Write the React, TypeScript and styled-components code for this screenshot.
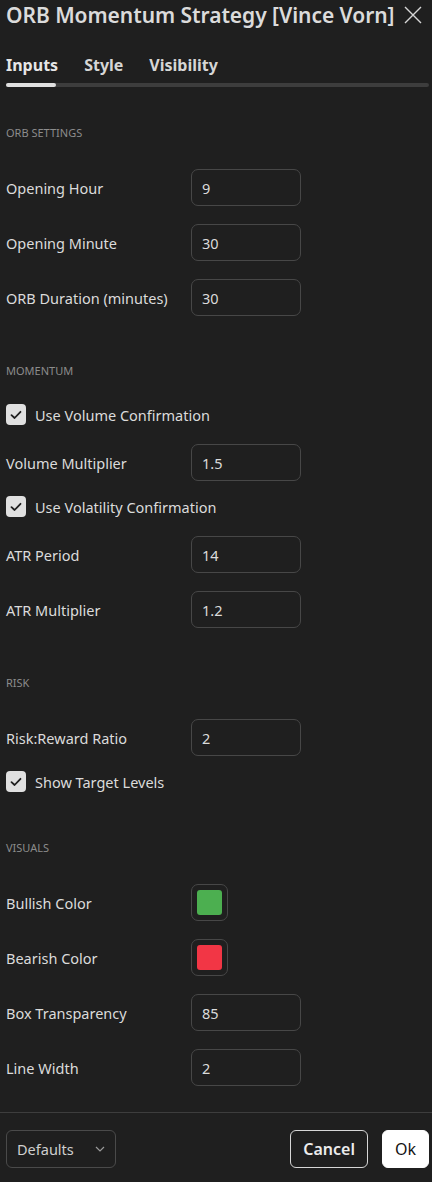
import React from "react";
import styled, { createGlobalStyle } from "styled-components";

const GlobalStyle = createGlobalStyle`
  html, body {
    margin: 0;
    padding: 0;
    background: #1f1f1f;
  }
  body {
    font-family: "Noto Sans", "DejaVu Sans", sans-serif;
    color: #dbdbdb;
  }
`;

type Field =
  | { kind: "input"; label: string; value: string }
  | { kind: "check"; label: string }
  | { kind: "color"; label: string; color: string };

type Section = { title: string; fields: Field[] };

const sections: Section[] = [
  {
    title: "ORB SETTINGS",
    fields: [
      { kind: "input", label: "Opening Hour", value: "9" },
      { kind: "input", label: "Opening Minute", value: "30" },
      { kind: "input", label: "ORB Duration (minutes)", value: "30" },
    ],
  },
  {
    title: "MOMENTUM",
    fields: [
      { kind: "check", label: "Use Volume Confirmation" },
      { kind: "input", label: "Volume Multiplier", value: "1.5" },
      { kind: "check", label: "Use Volatility Confirmation" },
      { kind: "input", label: "ATR Period", value: "14" },
      { kind: "input", label: "ATR Multiplier", value: "1.2" },
    ],
  },
  {
    title: "RISK",
    fields: [
      { kind: "input", label: "Risk:Reward Ratio", value: "2" },
      { kind: "check", label: "Show Target Levels" },
    ],
  },
  {
    title: "VISUALS",
    fields: [
      { kind: "color", label: "Bullish Color", color: "#4caf50" },
      { kind: "color", label: "Bearish Color", color: "#f23645" },
      { kind: "input", label: "Box Transparency", value: "85" },
      { kind: "input", label: "Line Width", value: "2" },
    ],
  },
];

const Dialog = styled.div`
  width: 432px;
  height: 1182px;
  display: flex;
  flex-direction: column;
  background: #1f1f1f;
  overflow: hidden;
`;

const Header = styled.div`
  display: flex;
  align-items: center;
  justify-content: space-between;
  height: 30px;
  padding: 0 9px 0 6px;
`;

const Title = styled.h1`
  margin: 0;
  font-size: 21px;
  font-weight: 600;
  color: #dbdbdb;
  white-space: nowrap;
  letter-spacing: -0.05px;
`;

const CloseButton = styled.button`
  width: 20px;
  height: 20px;
  padding: 0;
  border: none;
  background: none;
  color: #dbdbdb;
  display: flex;
  align-items: center;
  justify-content: center;
`;

const Tabs = styled.div`
  display: flex;
  gap: 26px;
  padding: 23px 6px 0;
  height: 24px;
  align-items: center;
`;

const Tab = styled.div<{ $active?: boolean }>`
  font-size: 16px;
  font-weight: 700;
  color: ${({ $active }) => ($active ? "#e6e6e6" : "#d6d6d6")};
`;

const Track = styled.div`
  margin: 6px 3px 0 6px;
  height: 4px;
  border-radius: 2px;
  background: #3d3d3d;
  display: flex;
`;

const TrackActive = styled.div`
  width: 50px;
  height: 4px;
  border-radius: 2px;
  background: #e0e0e0;
`;

const Content = styled.div`
  flex: 1;
  display: flex;
  flex-direction: column;
  padding: 0 6px;
`;

const SectionBlock = styled.div`
  display: flex;
  flex-direction: column;
  margin-top: 17px;
`;

const SectionTitle = styled.div`
  height: 56px;
  display: flex;
  align-items: center;
  font-size: 11px;
  color: #8c8c8c;
  text-transform: uppercase;
`;

const Row = styled.div<{ $tall?: boolean }>`
  box-sizing: border-box;
  height: ${({ $tall }) => ($tall ? "55px" : "37px")};
  padding-bottom: ${({ $tall }) => ($tall ? "0" : "4px")};
  display: flex;
  align-items: center;
`;

const Label = styled.div`
  width: 185px;
  font-size: 14.5px;
  color: #dbdbdb;
  white-space: nowrap;
`;

const TextInput = styled.div`
  box-sizing: border-box;
  width: 110px;
  height: 37px;
  border: 1px solid #474747;
  border-radius: 7px;
  padding: 0 10px;
  display: flex;
  align-items: center;
  font-size: 14.5px;
  color: #dbdbdb;
`;

const Swatch = styled.div`
  box-sizing: border-box;
  width: 37px;
  height: 37px;
  border: 1px solid #474747;
  border-radius: 7px;
  padding: 5px;
  display: flex;
`;

const SwatchFill = styled.div<{ $color: string }>`
  flex: 1;
  border-radius: 3px;
  background: ${({ $color }) => $color};
`;

const CheckBox = styled.div`
  width: 20px;
  height: 21px;
  border-radius: 4px;
  background: #e0e0e0;
  display: flex;
  align-items: center;
  justify-content: center;
  margin-right: 9px;
`;

const CheckLabel = styled.span`
  font-size: 14.5px;
  color: #dbdbdb;
`;

const Divider = styled.div`
  height: 1px;
  background: #3d3d3d;
`;

const Footer = styled.div`
  display: flex;
  align-items: center;
  padding: 17px 3px 14px 6px;
  gap: 14px;
`;

const Select = styled.div`
  box-sizing: border-box;
  width: 110px;
  height: 38px;
  border: 1px solid #4a4a4a;
  border-radius: 6px;
  padding: 0 10px;
  display: flex;
  align-items: center;
  justify-content: space-between;
  font-size: 14.5px;
  color: #cfcfcf;
  margin-right: auto;
`;

const Button = styled.button<{ $primary?: boolean }>`
  box-sizing: border-box;
  height: 38px;
  padding: 0 12px;
  border-radius: 6px;
  font-family: inherit;
  font-size: 16px;
  font-weight: ${({ $primary }) => ($primary ? 400 : 600)};
  border: 1px solid ${({ $primary }) => ($primary ? "#ffffff" : "#d6d6d6")};
  background: ${({ $primary }) => ($primary ? "#ffffff" : "transparent")};
  color: ${({ $primary }) => ($primary ? "#131313" : "#ececec")};
`;

const CheckIcon = () => (
  <svg width="12" height="10" viewBox="0 0 12 10">
    <path d="M1.5 5.2 L4.6 8 L10.5 1.8" fill="none" stroke="#1f1f1f" strokeWidth="1.8" strokeLinecap="round" strokeLinejoin="round" />
  </svg>
);

const renderField = (f: Field, i: number) => {
  if (f.kind === "check") {
    return (
      <Row key={i}>
        <CheckBox>
          <CheckIcon />
        </CheckBox>
        <CheckLabel>{f.label}</CheckLabel>
      </Row>
    );
  }
  return (
    <Row key={i} $tall>
      <Label>{f.label}</Label>
      {f.kind === "input" ? (
        <TextInput>{f.value}</TextInput>
      ) : (
        <Swatch>
          <SwatchFill $color={f.color} />
        </Swatch>
      )}
    </Row>
  );
};

export default function App() {
  return (
    <>
      <GlobalStyle />
      <Dialog>
        <Header>
          <Title>ORB Momentum Strategy [Vince Vorn]</Title>
          <CloseButton aria-label="Close">
            <svg width="18" height="18" viewBox="0 0 18 18">
              <path d="M1 1 L17 17 M17 1 L1 17" stroke="#d6d6d6" strokeWidth="1.4" />
            </svg>
          </CloseButton>
        </Header>
        <Tabs>
          <Tab $active>Inputs</Tab>
          <Tab>Style</Tab>
          <Tab>Visibility</Tab>
        </Tabs>
        <Track>
          <TrackActive />
        </Track>
        <Content>
          {sections.map((s) => (
            <SectionBlock key={s.title}>
              <SectionTitle>{s.title}</SectionTitle>
              {s.fields.map(renderField)}
            </SectionBlock>
          ))}
        </Content>
        <Divider />
        <Footer>
          <Select>
            Defaults
            <svg width="10" height="6" viewBox="0 0 10 6">
              <path d="M1 1 L5 5 L9 1" fill="none" stroke="#9a9a9a" strokeWidth="1.2" />
            </svg>
          </Select>
          <Button>Cancel</Button>
          <Button $primary>Ok</Button>
        </Footer>
      </Dialog>
    </>
  );
}
